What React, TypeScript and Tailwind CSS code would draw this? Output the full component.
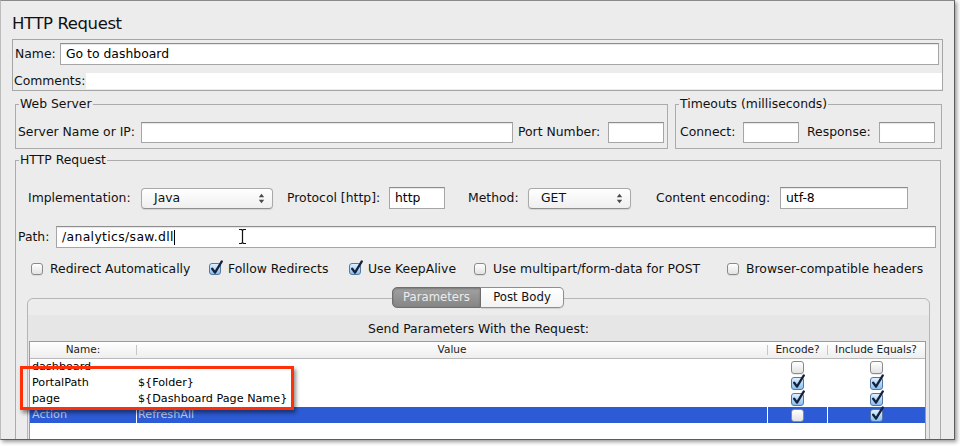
import React from "react";

const FONT = "font-['DejaVu_Sans','Liberation_Sans',sans-serif]";

// text field, height passed in className
function Field({ className = "", children }: { className?: string; children?: React.ReactNode }) {
  return (
    <div
      className={`border border-[#a6a6a6] border-t-[#8d8d8d] bg-white shadow-[inset_0_1px_1px_rgba(0,0,0,0.1)] flex items-center px-[5px] text-[12.4px] text-black ${className}`}
    >
      {children}
    </div>
  );
}

function Select({ className = "", value }: { className?: string; value: string }) {
  return (
    <div
      className={`h-[21px] rounded-[4px] border border-[#a9a9a9] border-b-[#8f8f8f] bg-gradient-to-b from-white to-[#efefef] shadow-[0_1px_1px_rgba(0,0,0,0.1)] flex items-center justify-between pl-[12px] pr-[7px] text-[12.4px] ${className}`}
    >
      <span>{value}</span>
      <svg width="7" height="11" viewBox="0 0 7 11">
        <path d="M0.8 4.2 L3.5 0.8 L6.2 4.2Z M0.8 6.8 L3.5 10.2 L6.2 6.8Z" fill="#4a4a4a" />
      </svg>
    </div>
  );
}

function Check({ on, big = false }: { on: boolean; big?: boolean }) {
  const size = big ? "w-[13px] h-[13px]" : "w-[12px] h-[12px]";
  if (!on) {
    return (
      <span
        className={`inline-block ${size} shrink-0 rounded-[3px] border border-[#8a8a8a] bg-gradient-to-b from-white to-[#e2e2e2] shadow-[0_1px_0_rgba(0,0,0,0.08)]`}
      />
    );
  }
  return (
    <span
      className={`relative inline-block ${size} shrink-0 rounded-[3px] border border-[#56779f] bg-gradient-to-b from-[#dff0ff] to-[#86bff0]`}
    >
      <svg className="absolute -top-[4px] left-0" width="14" height="16" viewBox="0 0 14 16">
        <path
          d="M2.2 8.8 L5 12.6 L11.8 1.4"
          fill="none"
          stroke="#16223d"
          strokeWidth="2.3"
          strokeLinecap="round"
          strokeLinejoin="round"
        />
      </svg>
    </span>
  );
}

function Option({ on, label, className = "" }: { on: boolean; label: string; className?: string }) {
  return (
    <div className={`flex items-center gap-[7px] ${className}`}>
      <Check on={on} />
      <span className="whitespace-nowrap">{label}</span>
    </div>
  );
}

const rows = [
  { name: "dashboard", value: "", enc: false, eq: false },
  { name: "PortalPath", value: "${Folder}", enc: true, eq: true },
  { name: "page", value: "${Dashboard Page Name}", enc: true, eq: true },
  { name: "Action", value: "RefreshAll", enc: false, eq: true, selected: true },
];

export default function App() {
  return (
    <div className={`w-[960px] h-[446px] bg-white ${FONT} text-[12.4px] text-[#111]`}>
      <div className="relative w-[955px] h-[440px] bg-[#ececec] border border-[#8a8a8a] border-l-[#bdbdbd] border-r-[#5c5c5c] border-b-[#5c5c5c] shadow-[2px_2px_4px_rgba(0,0,0,0.4)] overflow-hidden flex flex-col px-[11px]">
        {/* title */}
        <div className="h-[38px] shrink-0 pt-[13px] text-[16.5px] leading-[20px] tracking-[-0.4px]">HTTP Request</div>

        {/* name / comments */}
        <div className="h-[52px] shrink-0 border border-[#a6a6a6] flex flex-col">
          <div className="flex items-center mt-[3px]">
            <span className="w-[47px] pl-[2px]">Name:</span>
            <Field className="h-[22px] flex-1 mr-[3px]">Go to dashboard</Field>
          </div>
          <div className="flex items-center mt-[8px] h-[16px]">
            <span className="w-[73px] pl-[1px]">Comments:</span>
            <div className="flex-1 h-[16px] bg-white" />
          </div>
        </div>

        {/* web server + timeouts */}
        <div className="flex shrink-0 mt-[6px] pl-[3px] gap-[7px]">
          <fieldset className="w-[653px] border border-[#ababab] px-[2px] pt-[11px] pb-[5px]">
            <legend className="ml-[1px] px-[1px] leading-[14px]">Web Server</legend>
            <div className="flex items-center">
              <span className="w-[123px]">Server Name or IP:</span>
              <Field className="h-[21px] w-[372px]" />
              <span className="w-[95px] pl-[5px]">Port Number:</span>
              <Field className="h-[21px] w-[56px]" />
            </div>
          </fieldset>
          <fieldset className="w-[267px] border border-[#ababab] px-[2px] pt-[11px] pb-[5px]">
            <legend className="ml-[1px] px-[1px] leading-[14px]">Timeouts (milliseconds)</legend>
            <div className="flex items-center">
              <span className="w-[65px] pl-[2px]">Connect:</span>
              <Field className="h-[21px] w-[56px]" />
              <span className="w-[80px] pl-[8px]">Response:</span>
              <Field className="h-[21px] w-[56px]" />
            </div>
          </fieldset>
        </div>

        {/* http request */}
        <fieldset className="ml-[3px] mt-[4px] w-[926px] h-[320px] shrink-0 border border-[#ababab] pt-[20px]">
          <legend className="ml-[3px] px-[1px] leading-[14px]">HTTP Request</legend>

          <div className="flex items-center h-[22px] pl-[12px]">
            <span className="w-[113px]">Implementation:</span>
            <Select className="w-[132px]" value="Java" />
            <span className="w-[116px] pl-[14px]">Protocol [http]:</span>
            <Field className="h-[22px] w-[56px]">http</Field>
            <span className="w-[83px] pl-[23px]">Method:</span>
            <Select className="w-[103px]" value="GET" />
            <span className="w-[149px] pl-[25px] whitespace-nowrap">Content encoding:</span>
            <Field className="h-[22px] w-[128px]">utf-8</Field>
          </div>

          <div className="flex items-center mt-[17px] pl-[2px]">
            <span className="w-[38px]">Path:</span>
            <Field className="h-[22px] w-[880px] border-[#6d9cd6] shadow-[0_0_0_2px_rgba(125,170,225,0.75)]">
              <span className="tracking-[0.35px]">/analytics/saw.dll</span>
              <span className="inline-block w-px h-[15px] bg-black" />
            </Field>
          </div>

          <div className="flex items-center h-[16px] mt-[13px] pl-[15px]">
            <Option on={false} label="Redirect Automatically" className="w-[178px]" />
            <Option on={true} label="Follow Redirects" className="w-[140px]" />
            <Option on={true} label="Use KeepAlive" className="w-[125px]" />
            <Option on={false} label="Use multipart/form-data for POST" className="w-[253px]" />
            <Option on={false} label="Browser-compatible headers" />
          </div>

          {/* tabs */}
          <div className="relative z-10 flex justify-center mt-[10px] h-[21px] text-[11.7px]">
            <div className="w-[89px] h-[21px] flex items-center justify-center rounded-l-[5px] border border-[#6f6f6f] bg-gradient-to-b from-[#a2a2a2] to-[#858585] text-[#ececec] shadow-[inset_0_1px_2px_rgba(0,0,0,0.25)]">
              Parameters
            </div>
            <div className="w-[83px] h-[21px] flex items-center justify-center rounded-r-[5px] border border-l-0 border-[#8e8e8e] bg-gradient-to-b from-white to-[#f3f3f3] text-[#111] shadow-[0_1px_1px_rgba(0,0,0,0.12)]">
              Post Body
            </div>
          </div>

          {/* tab panel */}
          <div className="-mt-[10px] ml-[11px] w-[903px] h-[200px] border border-[#b6b6b6] rounded-t-[6px] bg-[#e6e6e6] flex flex-col">
            <div className="h-[16px] shrink-0 rounded-t-[6px] bg-[#ececec]" />
            <div className="h-[26px] shrink-0 flex items-center justify-center pt-[2px]">Send Parameters With the Request:</div>
            <div className="ml-[1px] w-[897px] flex-1 border border-[#9c9c9c] bg-white text-[11.2px]">
              <div className="flex h-[17px] border-b border-[#b9b9b9] bg-gradient-to-b from-white to-[#eeeeee] text-[10.5px] text-[#222]">
                <div className="w-[106px] flex items-center justify-center">Name:</div>
                <div className="w-px my-[3px] bg-[#c6c6c6]" />
                <div className="w-[630px] flex items-center justify-center">Value</div>
                <div className="w-px my-[3px] bg-[#c6c6c6]" />
                <div className="w-[59px] flex items-center justify-center">Encode?</div>
                <div className="w-px my-[3px] bg-[#c6c6c6]" />
                <div className="w-[96px] flex items-center justify-center">Include Equals?</div>
              </div>
              {rows.map((r) => (
                <div
                  key={r.name}
                  className={`flex h-[16px] ${r.selected ? "bg-[#2c5bd5] text-[#c2cdf0]" : "bg-white text-black"}`}
                >
                  <div className={`w-[107px] pl-[2px] flex items-center border-r ${r.selected ? "border-white" : "border-transparent"}`}>
                    {r.name}
                  </div>
                  <div className={`w-[631px] pl-[1px] flex items-center border-r ${r.selected ? "border-white" : "border-transparent"}`}>
                    {r.value}
                  </div>
                  <div className={`w-[60px] flex items-center justify-center border-r ${r.selected ? "border-white" : "border-transparent"}`}>
                    <Check on={r.enc} big />
                  </div>
                  <div className="flex-1 flex items-center justify-center">
                    <Check on={r.eq} big />
                  </div>
                </div>
              ))}
            </div>
          </div>
        </fieldset>

        {/* annotation box */}
        <div className="absolute left-[19px] top-[365px] w-[274px] h-[44px] border-[3px] border-[#ff3008] shadow-[2px_3px_4px_rgba(0,0,0,0.45)]" />

        {/* I-beam mouse cursor */}
        <svg className="absolute left-[237px] top-[227px]" width="9" height="17" viewBox="0 0 9 17">
          <path d="M1 1.5 H3.5 L4.5 2.5 L5.5 1.5 H8 M4.5 2.5 V14.5 M1 15.5 H3.5 L4.5 14.5 L5.5 15.5 H8" fill="none" stroke="#111" strokeWidth="1.2" />
        </svg>
      </div>
    </div>
  );
}
